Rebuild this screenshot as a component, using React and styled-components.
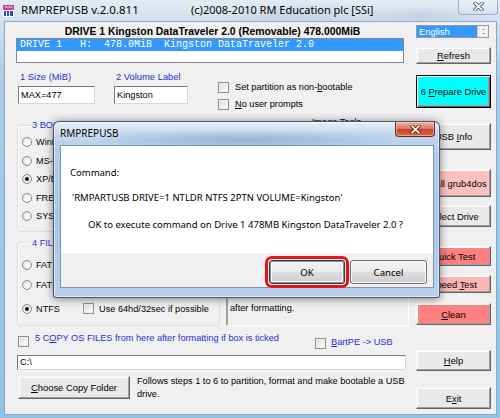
import React from 'react';
import styled, { createGlobalStyle } from 'styled-components';

const GlobalStyle = createGlobalStyle`
  html, body { margin: 0; padding: 0; }
  body { background: #fff; font-family: "Liberation Sans", Arial, sans-serif; }
  * { box-sizing: border-box; }
`;

const BLUE = '#2e2ed8';
const UI = '"Liberation Sans", Arial, sans-serif';
const AERO = '"Noto Sans", "Open Sans", sans-serif';

const Screen = styled.div`
  position: relative;
  width: 500px;
  height: 418px;
  overflow: hidden;
  display: flex;
  flex-direction: column;
  background:
    radial-gradient(ellipse 90px 12px at 300px 14px, rgba(150, 170, 195, 0.35), transparent),
    radial-gradient(ellipse 70px 10px at 420px 16px, rgba(150, 170, 195, 0.3), transparent),
    linear-gradient(180deg, #e2eaf4 0px, #d3e0ef 20px, #a9cbe8 80px, #8fc4e6 100%);
`;

const TitleBar = styled.div`
  height: 21px;
  flex: 0 0 21px;
  display: flex;
  align-items: flex-start;
`;

const IconBox = styled.svg`
  margin: 5px 0 0 3px;
  flex: 0 0 11px;
`;

const Caption = styled.div`
  flex: 0 0 170px;
  margin-left: 7px;
  font-family: ${AERO};
  font-size: ${(p) => p.$size || 11}px;
  line-height: 20px;
  color: #000;
  text-shadow: 0 0 6px rgba(255, 255, 255, 0.95);
  white-space: nowrap;
`;

const Copyright = styled(Caption)`
  flex: 0 0 auto;
  margin-left: 0;
`;

const FrameClose = styled.div`
  margin-left: auto;
  margin-right: 2px;
  width: 40px;
  height: 15px;
  border: 1px solid rgba(80, 100, 130, 0.45);
  border-top: none;
  border-radius: 0 0 4px 4px;
  background: linear-gradient(180deg, rgba(255, 255, 255, 0.35), rgba(210, 225, 240, 0.35));
  display: flex;
  justify-content: center;
  align-items: flex-start;
  padding-top: 2px;
`;

const Client = styled.div`
  flex: 1;
  margin: 0 3px 3px 4px;
  background: #f0f0f0;
  border: 1px solid #8fa7c2;
  display: grid;
  grid-template-columns: 393px 75px;
  column-gap: 7px;
  padding: 0 5px 0 11px;
  font-family: ${UI};
  font-size: 9.2px;
  color: #000;
`;

const LeftCol = styled.div`
  display: flex;
  flex-direction: column;
  padding-top: 3px;
`;

const RightCol = styled.div`
  display: flex;
  flex-direction: column;
`;

const DriveTitle = styled.div`
  height: 13px;
  line-height: 13px;
  font-weight: bold;
  font-size: 10.4px;
  text-align: center;
  white-space: nowrap;
`;

const DriveList = styled.div`
  width: 388px;
  height: 25px;
  border: 1px solid #828790;
  background: #fff;
`;

const DriveRow = styled.div`
  height: 12px;
  line-height: 12px;
  background: #3399ff;
  color: #fff;
  font-family: "Liberation Mono", "Courier New", monospace;
  font-size: 10px;
  padding-left: 3px;
  white-space: pre;
`;

const OptionsRow = styled.div`
  display: flex;
  align-items: flex-start;
  margin-top: 8px;
`;

const Field = styled.div`
  display: flex;
  flex-direction: column;
  margin-left: ${(p) => p.$left}px;
  width: ${(p) => p.$width}px;
`;

const FieldLabel = styled.div`
  height: 12px;
  line-height: 12px;
  padding-left: 2px;
  color: ${BLUE};
  font-size: 9.4px;
`;

const TextBox = styled.input`
  margin-top: 3px;
  width: 100%;
  height: 18px;
  border: 1px solid;
  border-color: #7a7a7a #d8d8d8 #d8d8d8 #7a7a7a;
  background: #fff;
  font-family: ${UI};
  font-size: 9.2px;
  padding: 0 2px;
  outline: none;
  color: #000;
`;

const PathBox = styled(TextBox)`
  margin: 4px 0 0 1px;
  width: 389px;
  height: 15px;
`;

const CheckList = styled.div`
  display: flex;
  flex-direction: column;
  gap: 5px;
  margin-top: 10px;
  margin-left: 30px;
`;

const CheckRow = styled.div`
  display: flex;
  align-items: center;
  gap: ${(p) => p.$gap || 6}px;
  height: ${(p) => p.$h || 12}px;
  white-space: nowrap;
`;

const CheckBox = styled.span`
  flex: 0 0 11px;
  width: 11px;
  height: 11px;
  border: 1px solid #8e8f8f;
  background: linear-gradient(135deg, #d6d6d6, #f6f6f6 70%, #fff);
  box-shadow: inset 0 0 0 1px #f2f2f2;
`;

const Middle = styled.div`
  display: grid;
  grid-template-columns: 204px 183px;
  column-gap: 6px;
  margin-top: 6px;
`;

const GroupCol = styled.div`
  display: flex;
  flex-direction: column;
`;

const Group = styled.fieldset`
  margin: ${(p) => p.$top}px 0 0 1px;
  width: 203px;
  padding: ${(p) => p.$pad};
  border: 1px solid #d5dfe5;
  border-radius: 3px;
  box-shadow: inset 1px 1px 0 #fff;
  min-width: 0;
`;

const Legend = styled.legend`
  margin-left: 8px;
  padding: 0 2px;
  line-height: 12px;
  color: ${BLUE};
  font-size: 9.2px;
  white-space: nowrap;
`;

const RadioRow = styled.div`
  display: flex;
  align-items: center;
  gap: 4px;
  height: ${(p) => p.$h || 18.5}px;
  white-space: nowrap;
`;

const Radio = styled.span`
  flex: 0 0 10px;
  width: 10px;
  height: 10px;
  border-radius: 50%;
  border: 1px solid #8e8f8f;
  background: radial-gradient(circle at 60% 60%, #fff, #dcdcdc);
  display: flex;
  align-items: center;
  justify-content: center;
  &::after {
    content: '';
    width: 4px;
    height: 4px;
    border-radius: 50%;
    background: ${(p) => (p.$on ? '#1b1b1b' : 'transparent')};
  }
`;

const FsRow = styled.div`
  display: grid;
  grid-template-columns: 61px 1fr;
  height: 20px;
  margin-top: ${(p) => p.$top || 0}px;
  align-items: center;
`;

const ToolsCol = styled.div`
  display: flex;
  flex-direction: column;
`;

const ToolsLabel = styled.div`
  height: 12px;
  line-height: 12px;
  padding-left: 38px;
  text-align: center;
`;

const ToolRow = styled.div`
  display: flex;
  gap: 6px;
  margin-top: 8px;
  padding: 0 6px;
`;

const InfoPanel = styled.div`
  margin-top: auto;
  height: 88px;
  border: 1px solid;
  border-color: #a0a0a0 #fff #fff #a0a0a0;
  box-shadow: 1px 1px 0 #a0a0a0 inset;
  padding: 3px 2px 11px 3px;
  display: flex;
  flex-direction: column;
  justify-content: flex-end;
  line-height: 12px;
`;

const InfoLine = styled.div`
  margin-top: ${(p) => p.$top || 0}px;
`;

const CopyRow = styled.div`
  display: flex;
  align-items: flex-start;
  height: 20px;
  margin-top: 5px;
  color: ${BLUE};
`;

const CopyCheck = styled(CheckBox)`
  margin: ${(p) => p.$top}px ${(p) => p.$gap}px 0 ${(p) => p.$left}px;
`;

const CopyText = styled.span`
  line-height: 12px;
  margin-top: ${(p) => p.$top}px;
  white-space: nowrap;
`;

const BartBlock = styled.div`
  margin-left: auto;
  width: 94px;
  display: flex;
  align-items: flex-start;
`;

const BottomRow = styled.div`
  display: flex;
  align-items: flex-start;
  margin-top: 6px;
  gap: 7px;
`;

const Note = styled.div`
  width: 270px;
  line-height: 13px;
  margin-top: -1px;
`;

const Button = styled.div`
  display: flex;
  align-items: center;
  justify-content: center;
  width: ${(p) => (p.$w ? `${p.$w}px` : '100%')};
  height: ${(p) => p.$h}px;
  margin-top: ${(p) => p.$top || 0}px;
  margin-left: ${(p) => p.$left || 0}px;
  flex: 0 0 auto;
  background: ${(p) => p.$bg || '#e9e9e9'};
  border: 1px solid;
  border-color: ${(p) => (p.$focus ? '#000' : '#f4f4f4 #646464 #646464 #f4f4f4')};
  box-shadow: ${(p) =>
    p.$focus
      ? 'inset 1px 1px 0 #fff, inset -1px -1px 0 #646464, inset -2px -2px 0 #a0a0a0'
      : 'inset -1px -1px 0 #a0a0a0, inset 1px 1px 0 #fff'};
  font-family: ${UI};
  font-size: 9.4px;
  color: #000;
  white-space: nowrap;
  overflow: hidden;
`;

const LangBox = styled.div`
  margin-top: 3px;
  width: 73px;
  height: 13px;
  border: 1px solid #9a9a9a;
  background: #fff;
  display: flex;
`;

const LangItem = styled.div`
  flex: 1;
  background: #3399ff;
  color: #fff;
  font-size: 9.4px;
  line-height: 11px;
  padding-left: 2px;
`;

const LangSpin = styled.div`
  flex: 0 0 11px;
  display: flex;
  flex-direction: column;
  align-items: center;
  justify-content: center;
  gap: 3px;
  background: #f0f0f0;
  border-left: 1px solid #d0d0d0;
  &::before,
  &::after {
    content: '';
    width: 1px;
    height: 1px;
    background: #555;
  }
`;

/* dialog */

const Dialog = styled.div`
  position: absolute;
  left: 53px;
  top: 121px;
  width: 387px;
  height: 177px;
  border: 1px solid rgba(45, 65, 95, 0.85);
  border-radius: 6px 6px 3px 3px;
  background:
    linear-gradient(180deg, rgba(255, 255, 255, 0.55) 0px, rgba(255, 255, 255, 0) 12px),
    radial-gradient(ellipse 160px 10px at 190px 18px, rgba(90, 120, 165, 0.35), transparent),
    linear-gradient(180deg, #c9dcf1 0%, #b2cbe8 20%, #aac6e6 60%, #b9d1eb 100%);
  box-shadow: 0 1px 8px rgba(0, 0, 0, 0.5), inset 0 0 0 1px rgba(255, 255, 255, 0.55);
  display: flex;
  flex-direction: column;
  padding: 0 5px 9px 6px;
  font-family: ${AERO};
`;

const DialogTitle = styled.div`
  height: 23px;
  display: flex;
  align-items: flex-start;
  justify-content: space-between;
`;

const DialogCaption = styled.div`
  font-size: 10px;
  line-height: 22px;
  color: #000;
  text-shadow: 0 0 6px rgba(255, 255, 255, 0.95);
`;

const DialogClose = styled.div`
  width: 40px;
  height: 15px;
  margin-right: -1px;
  border: 1px solid #6e2a1e;
  border-top: none;
  border-radius: 0 0 4px 4px;
  background: linear-gradient(180deg, #eab2a4 0%, #dc7d66 45%, #c7412a 55%, #d8684d 100%);
  box-shadow: inset 0 0 0 1px rgba(255, 220, 210, 0.5);
  display: flex;
  justify-content: center;
  align-items: center;
`;

const DialogClient = styled.div`
  flex: 1;
  display: flex;
  flex-direction: column;
  border: 1px solid #7f95ae;
  background: #f0f0f0;
`;

const DialogBody = styled.div`
  height: 107px;
  background: #fff;
  padding: 21px 0 0 9px;
  font-size: 9.5px;
  color: #000;
`;

const DialogLine = styled.div`
  line-height: 12px;
  margin-top: ${(p) => p.$top || 0}px;
  padding-left: ${(p) => p.$indent || 0}px;
  white-space: nowrap;
`;

const DialogButtons = styled.div`
  flex: 1;
  display: flex;
  justify-content: flex-end;
  align-items: flex-start;
  gap: 5px;
  padding: 7px 6px 0 0;
`;

const DialogButton = styled.div`
  width: ${(p) => p.$w}px;
  height: 24px;
  display: flex;
  align-items: center;
  justify-content: center;
  font-size: 9.6px;
  border: 1px solid ${(p) => (p.$default ? '#3c3c3c' : '#707070')};
  border-radius: 3px;
  background: linear-gradient(180deg, #f2f2f2 0%, #ebebeb 48%, #dddddd 52%, #cfcfcf 100%);
  box-shadow: ${(p) =>
    p.$default ? 'inset 0 0 0 1px #8a8a8a, inset 0 0 0 2px #fbfbfb' : 'inset 0 0 0 1px #fcfcfc'};
  outline: ${(p) => (p.$marked ? '3px solid #e3141c' : 'none')};
  outline-offset: 1px;
`;

const AppIcon = () => (
  <IconBox width="11" height="12" viewBox="0 0 11 12">
    <rect x="0" y="0" width="11" height="12" fill="#fff" />
    <rect x="0" y="0" width="11" height="5" fill="#c8428f" />
    <rect x="1.5" y="1.5" width="8" height="1" fill="#f3d0e6" />
    <rect x="1" y="6" width="2" height="5" fill="#3147b8" />
    <rect x="4" y="6" width="2" height="5" fill="#3147b8" />
    <rect x="7" y="6" width="3" height="5" fill="#3147b8" />
  </IconBox>
);

const CrossIcon = ({ shade }) => (
  <svg width="11" height="9" viewBox="0 0 11 9">
    <path d="M2 1.2 L9 7.8 M9 1.2 L2 7.8" stroke={shade} strokeWidth="3.4" strokeLinecap="round" />
    <path d="M2 1.2 L9 7.8 M9 1.2 L2 7.8" stroke="#fff" strokeWidth="1.7" strokeLinecap="round" />
  </svg>
);

const sideButtons = [
  { label: <><u>R</u>efresh</>, top: 9, h: 17 },
  { label: <>6 <u>P</u>repare Drive</>, top: 11, h: 33, bg: '#00ffff', focus: true },
  { label: <>USB <u>I</u>nfo</>, top: 15, h: 27 },
  { label: <>Install <u>g</u>rub4dos</>, top: 19, h: 28, bg: '#ffc0c0' },
  { label: <>Select Drive</>, top: 8, h: 22 },
  { label: <>Quick Test</>, top: 19, h: 20, bg: '#ff8080' },
  { label: <>Speed <u>T</u>est</>, top: 9, h: 18, bg: '#ffb4b4' },
  { label: <><u>C</u>lean</>, top: 10, h: 22, bg: '#ff8080' },
  { label: <><u>H</u>elp</>, top: 25, h: 21 },
  { label: <>E<u>x</u>it</>, top: 16, h: 22 },
];

const bootOptions = ['WinPE v2/v3 [BOOTMGR]', 'MS-DOS [IO.SYS]', 'XP/BartPE [NTLDR]', 'FREEDOS', 'SYSLINUX'];

export default function App() {
  return (
    <Screen>
      <GlobalStyle />
      <TitleBar>
        <AppIcon />
        <Caption $size={11.5}>RMPREPUSB v.2.0.811</Caption>
        <Copyright>(c)2008-2010 RM Education plc [SSi]</Copyright>
        <FrameClose>
          <CrossIcon shade="#4a5a6e" />
        </FrameClose>
      </TitleBar>

      <Client>
        <LeftCol>
          <DriveTitle>DRIVE 1 Kingston DataTraveler 2.0 (Removable) 478.000MiB</DriveTitle>
          <DriveList>
            <DriveRow>{'DRIVE 1   H:  478.0MiB  Kingston DataTraveler 2.0'}</DriveRow>
          </DriveList>

          <OptionsRow>
            <Field $left={2} $width={77}>
              <FieldLabel>1 Size (MiB)</FieldLabel>
              <TextBox value="MAX=477" readOnly />
            </Field>
            <Field $left={19} $width={74}>
              <FieldLabel>2 Volume Label</FieldLabel>
              <TextBox value="Kingston" readOnly />
            </Field>
            <CheckList>
              <CheckRow>
                <CheckBox />
                <span>Set partition as non-<u>b</u>ootable</span>
              </CheckRow>
              <CheckRow>
                <CheckBox />
                <span><u>N</u>o user prompts</span>
              </CheckRow>
            </CheckList>
          </OptionsRow>

          <Middle>
            <GroupCol>
              <Group $top={3} $pad="2px 0 5px 4px">
                <Legend>3 BOOT OPTIONS</Legend>
                {bootOptions.map((o, i) => (
                  <RadioRow key={o}>
                    <Radio $on={i === 2} />
                    <span>{o}</span>
                  </RadioRow>
                ))}
              </Group>
              <Group $top={5} $pad="6px 0 6px 4px">
                <Legend>4 FILESYSTEM</Legend>
                <FsRow>
                  <RadioRow $h={20}>
                    <Radio />
                    <span>FAT16</span>
                  </RadioRow>
                  <CheckRow $gap={5}>
                    <CheckBox />
                    <span>Boot as HDD</span>
                  </CheckRow>
                </FsRow>
                <FsRow>
                  <RadioRow $h={20}>
                    <Radio />
                    <span>FAT32</span>
                  </RadioRow>
                  <CheckRow $gap={5}>
                    <CheckBox />
                    <span>Boot as FDD</span>
                  </CheckRow>
                </FsRow>
                <FsRow $top={4}>
                  <RadioRow $h={20}>
                    <Radio $on />
                    <span>NTFS</span>
                  </RadioRow>
                  <CheckRow $gap={5}>
                    <CheckBox />
                    <span>Use 64hd/32sec if possible</span>
                  </CheckRow>
                </FsRow>
              </Group>
            </GroupCol>

            <ToolsCol>
              <ToolsLabel>Image Tools</ToolsLabel>
              <ToolRow>
                <Button $w={82} $h={22}>
                  <span>Drive -&gt; File</span>
                </Button>
                <Button $w={82} $h={22}>
                  <span>File -&gt; Drive</span>
                </Button>
              </ToolRow>
              <InfoPanel>
                <InfoLine>Files are copied to the USB drive</InfoLine>
                <InfoLine $top={10}>after formatting.</InfoLine>
              </InfoPanel>
            </ToolsCol>
          </Middle>

          <CopyRow>
            <CopyCheck $top={5} $left={2} $gap={6} />
            <CopyText $top={1}>
              5 C<u>O</u>PY OS FILES from here after formatting if box is ticked
            </CopyText>
            <BartBlock>
              <CopyCheck $top={7} $left={0} $gap={5} />
              <CopyText $top={5}>
                <u>B</u>artPE -&gt; USB
              </CopyText>
            </BartBlock>
          </CopyRow>

          <PathBox value="C:\" readOnly />

          <BottomRow>
            <Button $w={112} $h={23} $left={2}>
              <span>
                <u>C</u>hoose Copy Folder
              </span>
            </Button>
            <Note>Follows steps 1 to 6 to partition, format and make bootable a USB drive.</Note>
          </BottomRow>
        </LeftCol>

        <RightCol>
          <LangBox>
            <LangItem>English</LangItem>
            <LangSpin />
          </LangBox>
          {sideButtons.map((b, i) => (
            <Button key={i} $top={b.top} $h={b.h} $bg={b.bg} $focus={b.focus}>
              <span>{b.label}</span>
            </Button>
          ))}
        </RightCol>
      </Client>

      <Dialog>
        <DialogTitle>
          <DialogCaption>RMPREPUSB</DialogCaption>
          <DialogClose>
            <CrossIcon shade="#6a1d12" />
          </DialogClose>
        </DialogTitle>
        <DialogClient>
          <DialogBody>
            <DialogLine>Command:</DialogLine>
            <DialogLine $top={13} $indent={2}>
              'RMPARTUSB DRIVE=1 NTLDR NTFS 2PTN VOLUME=Kingston'
            </DialogLine>
            <DialogLine $top={15} $indent={18}>
              OK to execute command on Drive 1 478MB Kingston DataTraveler 2.0 ?
            </DialogLine>
          </DialogBody>
          <DialogButtons>
            <DialogButton $w={76} $default $marked>
              OK
            </DialogButton>
            <DialogButton $w={77}>Cancel</DialogButton>
          </DialogButtons>
        </DialogClient>
      </Dialog>
    </Screen>
  );
}
